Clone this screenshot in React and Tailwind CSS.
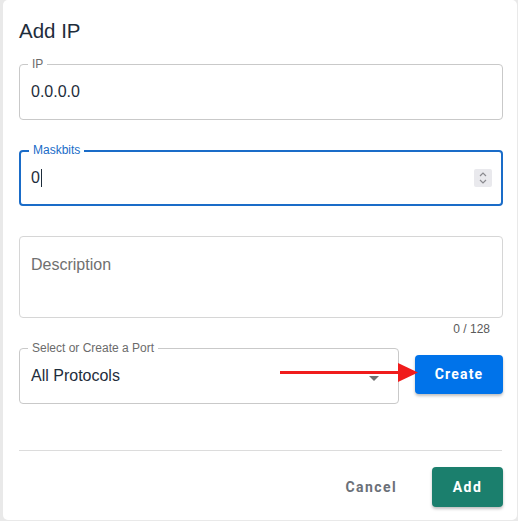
import React from "react";

function Field({ label, focused, className = "", children }) {
  return (
    <div
      className={`relative rounded-[4px] ${
        focused ? "border-2 border-[#1a6cc8]" : "border border-[#c9c9c9]"
      } ${className}`}
    >
      <span
        className={`absolute left-[8px] top-[-9px] bg-white px-[4px] text-[12px] leading-[16px] ${
          focused ? "left-[7px] top-[-10px] text-[#1a6cc8]" : "text-[#6b6b6b]"
        }`}
      >
        {label}
      </span>
      {children}
    </div>
  );
}

export default function App() {
  return (
    <div
      className="w-[518px] h-[521px] bg-[#e9e9e9] pl-[3px] pr-[1px] pb-[1px] flex"
      style={{ fontFamily: '"Liberation Sans", Arial, sans-serif' }}
    >
      <div className="flex-1 bg-white rounded-[5px] pt-[19px] pl-[16px] pr-[14px] flex flex-col">
        <h1 className="text-[20.5px] leading-[24px] text-[#1e2d3b] font-normal">Add IP</h1>

        <Field label="IP" className="mt-[21px] h-[56px] flex items-center">
          <span className="pl-[11px] text-[16px] text-[#1e2d3b]">0.0.0.0</span>
        </Field>

        <Field label="Maskbits" focused className="mt-[30px] h-[56px] flex items-center">
          <span className="pl-[10px] text-[16px] text-[#1e2d3b] flex items-center">
            0<span className="inline-block w-[1px] h-[18px] bg-[#1e2d3b] ml-[1px]" />
          </span>
          <div className="ml-auto mr-[9px] w-[18px] h-[18px] bg-[#e9e9ed] rounded-[2px] flex items-center justify-center">
            <svg width="10" height="14" viewBox="0 0 10 14" fill="none" stroke="#8a8a8f" strokeWidth="1.2">
              <path d="M2 5 L5 2 L8 5" />
              <path d="M2 9 L5 12 L8 9" />
            </svg>
          </div>
        </Field>

        <div className="mt-[30px] h-[82px] rounded-[4px] border border-[#d6d6d6] pt-[16px] pl-[11px]">
          <span className="text-[16px] leading-[20px] text-[#707070]">Description</span>
        </div>
        <div className="mt-[3px] text-right pr-[13px] text-[12px] leading-[16px] text-[#5a5a5a]">0 / 128</div>

        <div className="relative mt-[11px] flex items-start gap-[16px]">
          <Field label="Select or Create a Port" className="flex-1 h-[56px] flex items-center">
            <span className="pl-[11px] text-[16px] text-[#1e2d3b]">All Protocols</span>
            <svg className="ml-auto mr-[19px] mt-[5px]" width="10" height="5" viewBox="0 0 10 5">
              <path d="M0 0 H10 L5 5 Z" fill="#707070" />
            </svg>
          </Field>
          <button
            className="mt-[7px] w-[88px] h-[39px] rounded-[4px] bg-[#0073ea] text-white text-[14px] font-bold tracking-[1.2px] shadow-[0_2px_3px_rgba(0,0,0,0.25)]"
            style={{ fontFamily: "Roboto, Arial, sans-serif" }}
          >
            Create
          </button>
          <svg
            className="absolute left-[261px] top-[14px]"
            width="140"
            height="22"
            viewBox="0 0 140 22"
          >
            <rect x="0" y="9" width="120" height="3" fill="#f01c1c" />
            <path d="M118 1 L138 10.5 L118 20 Z" fill="#f01c1c" />
          </svg>
        </div>

        <div className="mt-[46px] h-[1px] bg-[#dcdcdc] mr-[1px]" />

        <div
          className="mt-[16px] flex items-center justify-end"
          style={{ fontFamily: "Roboto, Arial, sans-serif" }}
        >
          <span className="text-[14px] font-bold tracking-[1.4px] text-[#6b7078] mr-[35px]">Cancel</span>
          <button className="w-[71px] h-[40px] rounded-[4px] bg-[#1b7f6d] text-white text-[14px] font-bold tracking-[1.4px] shadow-[0_2px_3px_rgba(0,0,0,0.25)]">
            Add
          </button>
        </div>
      </div>
    </div>
  );
}
